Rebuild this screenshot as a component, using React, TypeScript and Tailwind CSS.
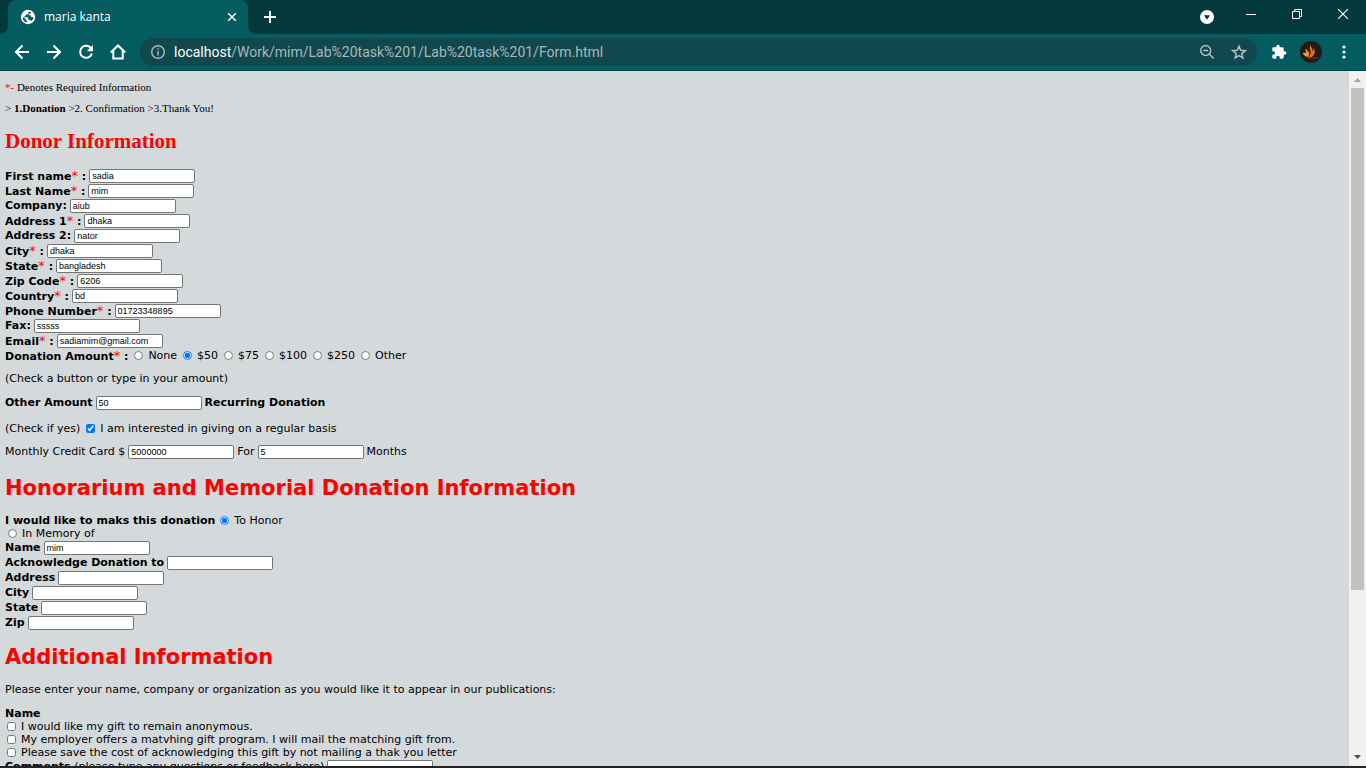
import React from "react";

const verdana = "font-['DejaVu_Sans',sans-serif]";
const times = "font-['Liberation_Serif',serif]";

function Star() {
  return <span className="text-[13px] leading-none font-normal text-[#ff0000]">*</span>;
}

function TextInput({ id, value = "", label }: { id: string; value?: string; label?: string }) {
  return (
    <input
      id={id}
      type="text"
      aria-label={label}
      defaultValue={value}
      className="h-[14px] w-[106px] rounded-[2px] border border-[#767676] bg-white px-[2px] font-['Liberation_Sans',sans-serif] text-[9px] leading-[11px] text-black"
    />
  );
}

type FieldProps = { id: string; label: string; required?: boolean; value?: string };

function Field({ id, label, required, value }: FieldProps) {
  return (
    <div className="flex h-[15px] items-center gap-[3px]">
      <label htmlFor={id} className="font-bold">
        {label}
        {required && (
          <>
            <Star /> :
          </>
        )}
      </label>
      <TextInput id={id} value={value} />
    </div>
  );
}

function Choice({ type, name, label, checked }: { type: "radio" | "checkbox"; name: string; label: string; checked?: boolean }) {
  return (
    <label className="flex h-[13px] items-center gap-[5px]">
      <input type={type} name={name} defaultChecked={checked} className="m-0 h-[9px] w-[9px] accent-[#0075ff]" />
      {label}
    </label>
  );
}

const donorFields: FieldProps[] = [
  { id: "first", label: "First name", required: true, value: "sadia" },
  { id: "last", label: "Last Name", required: true, value: "mim" },
  { id: "company", label: "Company:", value: "aiub" },
  { id: "address1", label: "Address 1", required: true, value: "dhaka" },
  { id: "address2", label: "Address 2:", value: "nator" },
  { id: "city", label: "City", required: true, value: "dhaka" },
  { id: "state", label: "State", required: true, value: "bangladesh" },
  { id: "zip", label: "Zip Code", required: true, value: "6206" },
  { id: "country", label: "Country", required: true, value: "bd" },
  { id: "phone", label: "Phone Number", required: true, value: "01723348895" },
  { id: "fax", label: "Fax:", value: "sssss" },
  { id: "email", label: "Email", required: true, value: "sadiamim@gmail.com" },
];

const honorFields: FieldProps[] = [
  { id: "h-name", label: "Name", value: "mim" },
  { id: "h-ack", label: "Acknowledge Donation to" },
  { id: "h-address", label: "Address" },
  { id: "h-city", label: "City" },
  { id: "h-state", label: "State" },
  { id: "h-zip", label: "Zip" },
];

function TabStrip() {
  return (
    <div className="flex h-[34px] shrink-0 items-stretch bg-[#03383d] text-white">
      <div className="flex w-2 items-end bg-[#045c61]">
        <div className="h-full w-full rounded-br-lg bg-[#03383d]" />
      </div>
      <div className="flex w-60 items-center rounded-t-lg bg-[#045c61] pl-3 pr-2">
        <svg viewBox="0 0 16 16" className="h-4 w-4">
          <circle cx="8" cy="8" r="7.2" fill="#fff" />
          <path d="M8.500 2.600v1.500c0 .8-.6 1.300-1.400 1.300H5.800v1.200c0 .5-.4.8-.9.8H3.600v.8h3.800c.5 0 .8.4.8.8v1.700h.9c.7 0 1.100.4 1.300 1l1.400.1c1-1 1.600-2.300 1.600-3.800h-1.700c-.5 0-.8-.3-.8-.8V6.300H8.700V4.800h2.100V3.300c-.7-.5-1.500-.7-2.300-.7z" fill="#045c61" />
          <path d="M2.500 8.200c0 2.800 2 5.100 4.700 5.400v-1.600c-.8 0-1.500-.7-1.500-1.500v-.7z" fill="#045c61" />
        </svg>
        <span className="ml-2 flex-1 text-[12px] leading-4">maria kanta</span>
        <button aria-label="Close tab" className="flex h-4 w-4 items-center justify-center">
          <svg viewBox="0 0 12 12" className="h-3 w-3" stroke="#fff" strokeWidth="1.5">
            <path d="M2.200 2.200l7.600 7.600M9.800 2.200l-7.600 7.600" />
          </svg>
        </button>
      </div>
      <div className="flex w-2 bg-[#045c61]">
        <div className="h-full w-full rounded-bl-lg bg-[#03383d]" />
      </div>
      <button aria-label="New tab" className="flex w-7 items-center justify-center">
        <svg viewBox="0 0 12 12" className="h-3 w-3" stroke="#fff" strokeWidth="2">
          <path d="M6 0v12M0 6h12" />
        </svg>
      </button>
      <div className="flex-1" />
      <button aria-label="Search tabs" className="flex w-[42px] items-center justify-center">
        <svg viewBox="0 0 14 14" className="h-[14px] w-[14px]">
          <circle cx="7" cy="7" r="7" fill="#fff" />
          <path d="M4 5.200h6L7 9.700z" fill="#03383d" />
        </svg>
      </button>
      <button aria-label="Minimize" className="flex h-7 w-[46px] items-center justify-center">
        <svg viewBox="0 0 10 10" className="h-[10px] w-[10px]"><path d="M0 5.500h10" stroke="#fff" /></svg>
      </button>
      <button aria-label="Restore" className="flex h-7 w-[46px] items-center justify-center">
        <svg viewBox="0 0 10 10" className="h-[10px] w-[10px]" fill="none" stroke="#fff">
          <path d="M.5 2.500h7v7h-7zM2.500 2.500v-2h7v7h-2" />
        </svg>
      </button>
      <button aria-label="Close" className="flex h-7 w-[46px] items-center justify-center">
        <svg viewBox="0 0 10 10" className="h-[10px] w-[10px]"><path d="M0 0l10 10M10 0L0 10" stroke="#fff" strokeWidth="1.100" /></svg>
      </button>
    </div>
  );
}

function NavButton({ label, children }: { label: string; children: React.ReactNode }) {
  return (
    <button aria-label={label} className="flex h-7 w-8 items-center justify-center">
      <svg viewBox="0 0 16 16" className="h-4 w-4" fill="none" stroke="#fff" strokeWidth="2">
        {children}
      </svg>
    </button>
  );
}

function Toolbar() {
  return (
    <div className="flex h-[37px] shrink-0 items-center border-b border-[#03444a] bg-[#045c61] pl-[6px] pr-[6px]">
      <NavButton label="Back"><path d="M15 8H2M8.500 1.500L2 8l6.500 6.500" /></NavButton>
      <NavButton label="Forward"><path d="M1 8h13M7.500 1.500L14 8l-6.500 6.500" /></NavButton>
      <NavButton label="Reload">
        <path d="M13.300 4.700A6 6 0 1 0 13.900 9.500" />
        <path d="M15 1v6.200H8.800z" fill="#fff" stroke="none" />
      </NavButton>
      <NavButton label="Home"><path d="M0.800 8.500L8 1.500l7.200 7M3.300 7v7.600h9.400V7" /></NavButton>
      <div className="ml-[6px] flex h-7 min-w-0 flex-1 items-center rounded-full bg-[#10484d] pl-[10px] pr-[10px]">
        <svg viewBox="0 0 16 16" className="h-4 w-4 shrink-0" fill="none" stroke="#a5b9bb" strokeWidth="1.500">
          <circle cx="8" cy="8" r="6.300" />
          <path d="M8 7v4.500M8 4.300v1.500" />
        </svg>
        <a href="#form" className="ml-2 flex-1 truncate font-['Roboto',sans-serif] text-[14px] leading-5 text-[#a5b9bb]">
          <span className="text-white">localhost</span>/Work/mim/Lab%20task%201/Lab%20task%201/Form.html
        </a>
        <button aria-label="Zoom" className="mr-4">
          <svg viewBox="0 0 16 16" className="h-4 w-4" fill="none" stroke="#b3bfc1" strokeWidth="1.500">
            <circle cx="6.700" cy="6.500" r="4.900" />
            <path d="M10.200 10l4.500 4.500M4.400 6.500h4.600" />
          </svg>
        </button>
        <button aria-label="Bookmark">
          <svg viewBox="0 0 16 16" className="h-4 w-4" fill="none" stroke="#b3bfc1" strokeWidth="1.500">
            <path d="M8 2.200l1.700 4.100 4.500.4-3.400 2.900 1 4.400L8 11.700 4.200 14l1-4.400-3.400-2.900 4.500-.4z" />
          </svg>
        </button>
      </div>
      <button aria-label="Extensions" className="ml-[14px]">
        <svg viewBox="0 0 24 24" className="h-4 w-4" fill="#fff">
          <path d="M20.500 11H19V7a2 2 0 0 0-2-2h-4V3.500a2.500 2.500 0 0 0-5 0V5H4a2 2 0 0 0-2 2v3.800h1.500a2.700 2.700 0 0 1 0 5.400H2V20a2 2 0 0 0 2 2h3.800v-1.500a2.700 2.700 0 0 1 5.400 0V22H17a2 2 0 0 0 2-2v-4h1.500a2.500 2.500 0 0 0 0-5z" />
        </svg>
      </button>
      <button aria-label="Profile" className="ml-[13px]">
        <svg viewBox="0 0 22 22" className="h-[22px] w-[22px]">
          <circle cx="11" cy="11" r="11" fill="#211a18" />
          <path d="M2.500 11.500c1.500.8 3 .6 4-.5-1-1-1.300-2.200-.3-3.500.3 1.500 1.300 2 2.300 3.500 1.200 2 .5 4-1 5-2-.3-4.200-2-5-4.500z" fill="#f2a01d" />
          <path d="M7.500 16.500c3-1.500 4-4.500 2.500-8-.5-1.500-.3-3 .8-4.500 0 2.500 1.700 3.500 2.200 6 .8-1 .9-2.500.5-4 2.300 4 1.500 9-3 10.500-1 .3-2 .3-3 0z" fill="#ef6a1d" />
          <path d="M7.500 17h11.500" stroke="#8c2f1a" />
        </svg>
      </button>
      <button aria-label="Menu" className="ml-[6px] flex h-7 w-8 items-center justify-center">
        <svg viewBox="0 0 4 14" className="h-[14px] w-1" fill="#fff">
          <circle cx="2" cy="2" r="1.600" /><circle cx="2" cy="7" r="1.600" /><circle cx="2" cy="12" r="1.600" />
        </svg>
      </button>
    </div>
  );
}

function ScrollBar() {
  return (
    <div className="flex w-[17px] shrink-0 flex-col items-center bg-[#f1f1f1]">
      <svg viewBox="0 0 17 17" className="h-[17px] w-[17px] shrink-0"><path d="M5 11l3.500-4 3.500 4z" fill="#a3a3a3" /></svg>
      <div className="w-[13px] flex-[502] bg-[#c1c1c1]" />
      <div className="flex-[159]" />
      <svg viewBox="0 0 17 17" className="h-[17px] w-[17px] shrink-0"><path d="M5 6l3.500 4L12 6z" fill="#505050" /></svg>
    </div>
  );
}

const heading = "text-[21px] leading-[26px] font-bold text-[#ff0000]";

export default function App() {
  return (
    <div className="flex h-screen flex-col overflow-hidden border-b-2 border-[#242424] font-['Open_Sans',sans-serif]">
      <TabStrip />
      <Toolbar />
      <div className="flex min-h-0 flex-1 bg-[#d4d9dc]">
        <form id="form" className={`min-w-0 flex-1 overflow-hidden pl-[5px] pt-[10px] text-[11px] leading-[13px] text-black ${verdana}`}>
          <p className={`leading-3 ${times}`}><span className="text-[#ff0000]">*-</span> Denotes Required Information</p>
          <p className={`mt-[9px] leading-3 ${times}`}>&gt; <b>1.Donation</b> &gt;2. Confirmation &gt;3.Thank You!</p>
          <h1 className={`mt-[15px] text-[21px] leading-6 font-bold text-[#ff0000] ${times}`}>Donor Information</h1>
          <div className="mt-[15px]">
            {donorFields.map((f) => <Field key={f.id} {...f} />)}
          </div>
          <div className="flex h-[15px] items-center gap-[6px]">
            <b>Donation Amount<Star /> :</b>
            <Choice type="radio" name="amount" label="None" />
            <Choice type="radio" name="amount" label="$50" checked />
            <Choice type="radio" name="amount" label="$75" />
            <Choice type="radio" name="amount" label="$100" />
            <Choice type="radio" name="amount" label="$250" />
            <Choice type="radio" name="amount" label="Other" />
          </div>
          <p className="mt-[9px]">(Check a button or type in your amount)</p>
          <div className="mt-[10px] flex h-[15px] items-center gap-[3px]">
            <label htmlFor="other" className="font-bold">Other Amount</label>
            <TextInput id="other" value="50" />
            <b>Recurring Donation</b>
          </div>
          <div className="mt-3 flex items-center gap-[6px]">
            (Check if yes)
            <Choice type="checkbox" name="regular" label="I am interested in giving on a regular basis" checked />
          </div>
          <div className="mt-[9px] flex h-[15px] items-center gap-[3px]">
            <label htmlFor="monthly">Monthly Credit Card $</label>
            <TextInput id="monthly" value="5000000" />
            <label htmlFor="months">For</label>
            <TextInput id="months" value="5" />
            Months
          </div>
          <h1 className={`mt-4 ${heading}`}>Honorarium and Memorial Donation Information</h1>
          <div className="mt-[13px] flex items-center gap-[5px]">
            <b>I would like to maks this donation</b>
            <Choice type="radio" name="honor" label="To Honor" checked />
          </div>
          <div className="pl-[3px]"><Choice type="radio" name="honor" label="In Memory of" /></div>
          <div>{honorFields.map((f) => <Field key={f.id} {...f} />)}</div>
          <h1 className={`mt-[14px] ${heading}`}>Additional Information</h1>
          <p className="mt-[13px]">Please enter your name, company or organization as you would like it to appear in our publications:</p>
          <p className="mt-[11px] font-bold">Name</p>
          <div className="pl-[2px]">
            <Choice type="checkbox" name="anonymous" label="I would like my gift to remain anonymous." />
            <Choice type="checkbox" name="employer" label="My employer offers a matvhing gift program. I will mail the matching gift from." />
            <Choice type="checkbox" name="letter" label="Please save the cost of acknowledging this gift by not mailing a thak you letter" />
          </div>
          <div className="flex h-[15px] items-center gap-[3px]">
            <label htmlFor="comments"><b>Comments</b> (please type any questions or feedback here)</label>
            <TextInput id="comments" />
          </div>
        </form>
        <ScrollBar />
      </div>
    </div>
  );
}
